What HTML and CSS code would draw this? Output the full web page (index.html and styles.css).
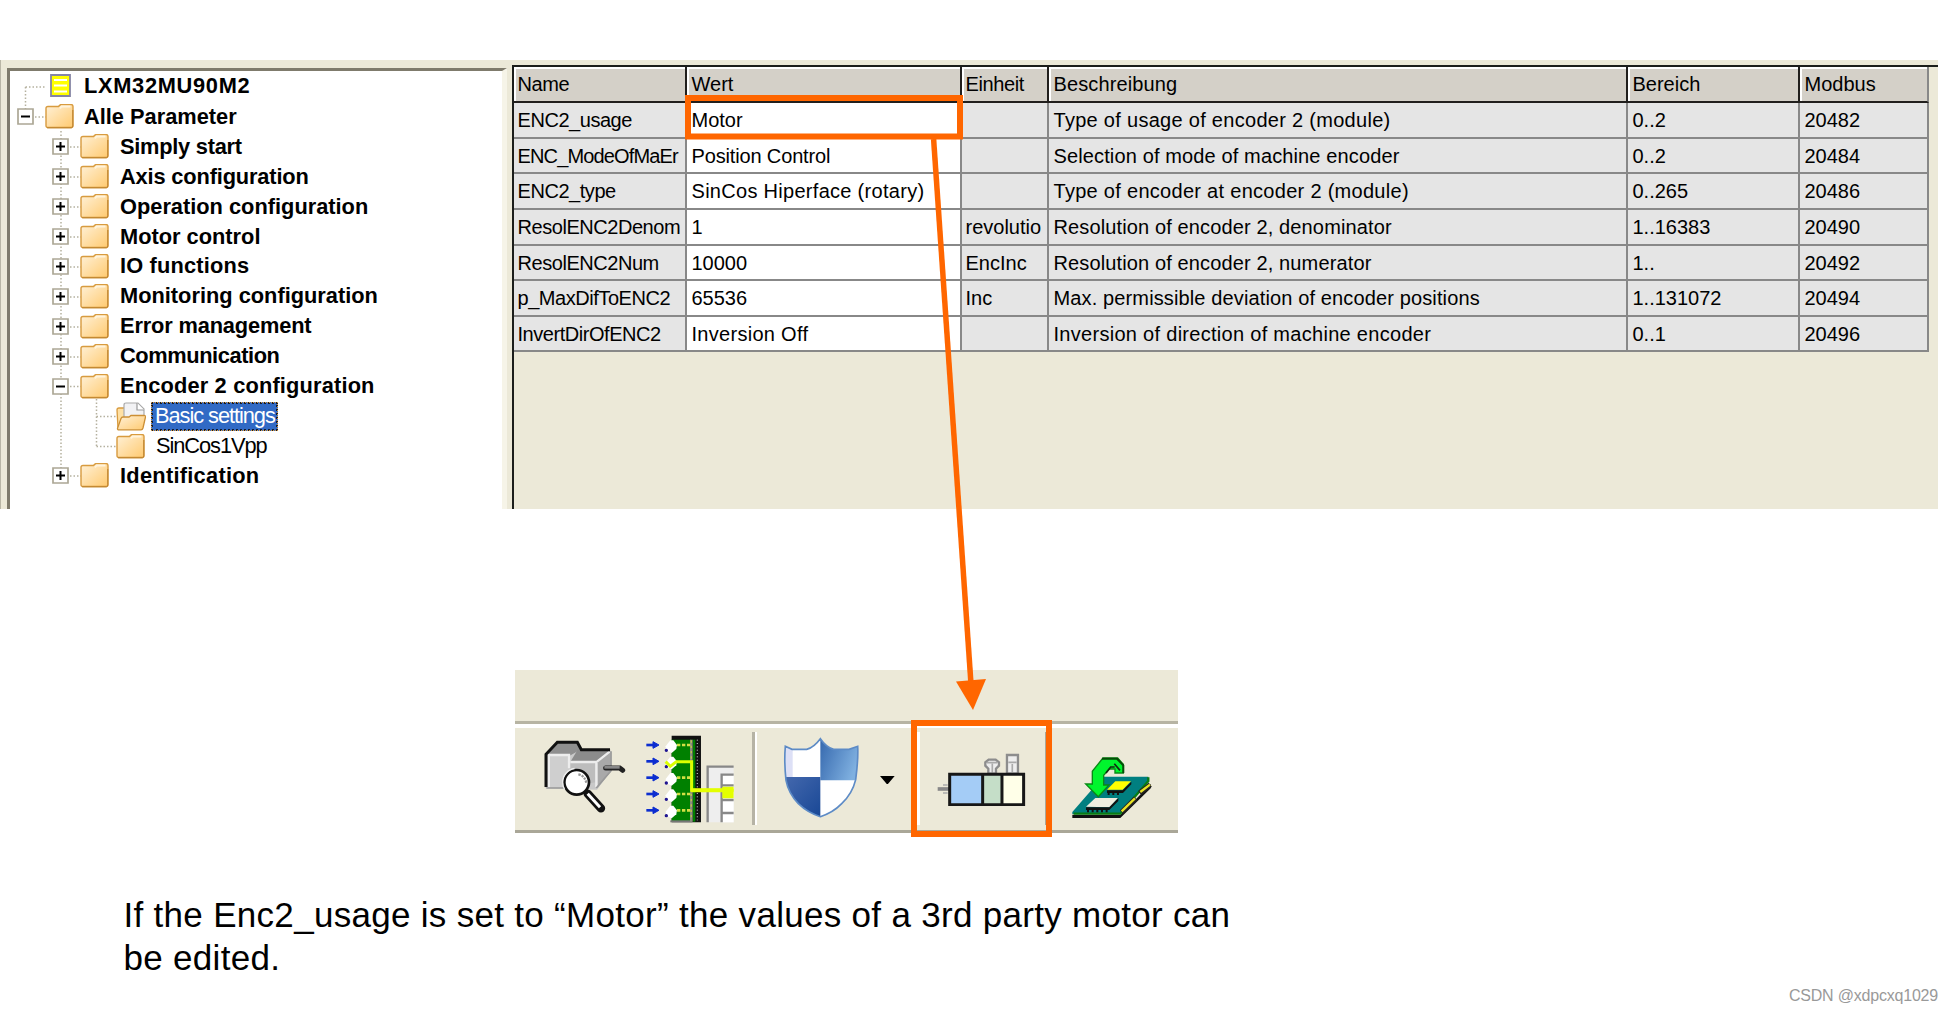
FILE: index.html
```html
<!DOCTYPE html>
<html lang="en">
<head>
<meta charset="utf-8">
<title>Encoder 2 configuration</title>
<link rel="stylesheet" href="styles.css">
</head>
<body>
<svg class="defs" width="0" height="0" aria-hidden="true">
  <defs>
    <linearGradient id="fold" x1="0" y1="0" x2="1" y2="1"><stop offset="0" stop-color="#fff1d8"/><stop offset="1" stop-color="#ffca70"/></linearGradient>
    <symbol id="folder" viewBox="0 0 29 25">
      <path d="M1 4.500q0-2 2-2h10.500q1.500-2 3-2h9.500q2 0 2 2v19q0 2-2 2h-23q-2 0-2-2z" fill="url(#fold)" stroke="#d89b3f" stroke-width="1.400"/>
      <path d="M15 4.500l1.500-2h9" fill="none" stroke="#fff3dc" stroke-width="1.800"/>
      <path d="M2 23.800h24.500q1.300-.2 1.300-2V6" fill="none" stroke="#bd822e" stroke-width="1"/>
    </symbol>
    <symbol id="open" viewBox="0 0 30 29">
      <path d="M1 8q0-2 2-2h6v9H24v11H2z" fill="#ffe0a3" stroke="#d89b3f" stroke-width="1.300"/>
      <path d="M8 19V3q0-2 2-2h12l6 6v12z" fill="#f2f2f4" stroke="#aaa" stroke-width="1.200"/>
      <path d="M21 1v7h7" fill="#fff" stroke="#999" stroke-width="1.200"/>
      <path d="M5 16.500q.5-1.500 2-1.500h6l2-1.500h13q1.800 0 1.500 1.500l-2.500 11q-.5 1.800-2 1.800H3q-1.700 0-1.500-1.500z" fill="url(#fold)" stroke="#cc8f35" stroke-width="1.300"/>
    </symbol>
    <symbol id="plus" viewBox="0 0 17 17"><path d="M1 1h15v15H1z" fill="#fff" stroke="#aca795" stroke-width="1.700"/><path d="M4 8.500h9M8.500 4v9" stroke="#000" stroke-width="2"/></symbol>
    <symbol id="minus" viewBox="0 0 17 17"><path d="M1 1h15v15H1z" fill="#fff" stroke="#aca795" stroke-width="1.700"/><path d="M4 8.500h9" stroke="#000" stroke-width="2"/></symbol>
  </defs>
</svg>

<main class="page">
  <section class="window">
    <nav class="tree">
      <svg class="guides" width="160" height="430"><path d="M15.500 16v24M15.500 16H36M25 46H36M51 60V400M86.500 328v47M86.500 345.500H107M86.500 375.500H107M60 76H71M60 106H71M60 136H71M60 166H71M60 196H71M60 226H71M60 256H71M60 286H71M60 315.500H71M60 405H71"/></svg>
      <ul>
        <li class="root device"><svg class="dev" viewBox="0 0 21 23"><path d="M1 1h19v21H1z" fill="#ff0" stroke="#8585a5" stroke-width="1.800"/><path d="M4 6h13M4 11.500h13M4 17.500h13" stroke="#fff" stroke-width="1.800"/></svg><span>LXM32MU90M2</span></li>
        <li class="root"><svg class="box"><use href="#minus"/></svg><svg class="folder"><use href="#folder"/></svg><span>Alle Parameter</span></li>
        <li class="tight"><svg class="box"><use href="#plus"/></svg><svg class="folder"><use href="#folder"/></svg><span>Simply start</span></li>
        <li class="snug"><svg class="box"><use href="#plus"/></svg><svg class="folder"><use href="#folder"/></svg><span>Axis configuration</span></li>
        <li><svg class="box"><use href="#plus"/></svg><svg class="folder"><use href="#folder"/></svg><span>Operation configuration</span></li>
        <li><svg class="box"><use href="#plus"/></svg><svg class="folder"><use href="#folder"/></svg><span>Motor control</span></li>
        <li class="loose"><svg class="box"><use href="#plus"/></svg><svg class="folder"><use href="#folder"/></svg><span>IO functions</span></li>
        <li><svg class="box"><use href="#plus"/></svg><svg class="folder"><use href="#folder"/></svg><span>Monitoring configuration</span></li>
        <li class="snug"><svg class="box"><use href="#plus"/></svg><svg class="folder"><use href="#folder"/></svg><span>Error management</span></li>
        <li class="tight comm"><svg class="box"><use href="#plus"/></svg><svg class="folder"><use href="#folder"/></svg><span>Communication</span></li>
        <li class="loose"><svg class="box"><use href="#minus"/></svg><svg class="folder"><use href="#folder"/></svg><span>Encoder 2 configuration</span></li>
        <li class="leaf selected"><svg class="openfolder"><use href="#open"/></svg><span>Basic settings</span></li>
        <li class="leaf"><svg class="folder"><use href="#folder"/></svg><span>SinCos1Vpp</span></li>
        <li class="loose ident"><svg class="box"><use href="#plus"/></svg><svg class="folder"><use href="#folder"/></svg><span>Identification</span></li>
      </ul>
    </nav>
    <div class="grid">
      <div class="row head"><div>Name</div><div>Wert</div><div>Einheit</div><div>Beschreibung</div><div>Bereich</div><div>Modbus</div></div>
      <div class="row"><div>ENC2_usage</div><div>Motor</div><div></div><div class="module">Type of usage of encoder 2 (module)</div><div>0..2</div><div>20482</div></div>
      <div class="row"><div class="long">ENC_ModeOfMaEr</div><div class="tight">Position Control</div><div></div><div>Selection of mode of machine encoder</div><div>0..2</div><div>20484</div></div>
      <div class="row"><div>ENC2_type</div><div class="module">SinCos Hiperface (rotary)</div><div></div><div class="module">Type of encoder at encoder 2 (module)</div><div>0..265</div><div>20486</div></div>
      <div class="row"><div>ResolENC2Denom</div><div>1</div><div>revolutio</div><div>Resolution of encoder 2, denominator</div><div>1..16383</div><div>20490</div></div>
      <div class="row"><div>ResolENC2Num</div><div>10000</div><div>EncInc</div><div>Resolution of encoder 2, numerator</div><div>1..</div><div>20492</div></div>
      <div class="row"><div>p_MaxDifToENC2</div><div>65536</div><div>Inc</div><div>Max. permissible deviation of encoder positions</div><div>1..131072</div><div>20494</div></div>
      <div class="row"><div>InvertDirOfENC2</div><div class="module">Inversion Off</div><div></div><div class="module">Inversion of direction of machine encoder</div><div>0..1</div><div>20496</div></div>
    </div>
  </section>

  <section class="toolbar">
    <div class="band"></div>
    <div class="tools">
      <!-- motor with magnifier -->
      <svg class="t-search" viewBox="100 236 248 222">
        <path d="M108 280l36-36h60l10 20v8l88-4 4 60-44 60-154-4z" fill="#c9c9c9"/>
        <path d="M112 276l32-28h60l8 20-32 18-60-2z" fill="#8f8f8f"/><path d="M204 268h98l-20 40h-102z" fill="#8b8b8b"/>
        <path d="M124 284l56 2-8 94h-48z" fill="#cfcfcf"/><path d="M182 306h78v60l-78 10z" fill="#bdbdbd"/>
        <path d="M264 306l38-34v64l-38 46z" fill="#a9a9a9"/><path d="M118 380v-96h60v40M182 305h78v75M262 304l38-30" fill="none" stroke="#ededed" stroke-width="7"/>
        <path d="M109 380v-98l34-36h60l12 22h86" fill="none" stroke="#111" stroke-width="9"/><path d="M110 383h55M260 383l44-52v-58" fill="none" stroke="#999" stroke-width="5"/>
        <path d="M288 323h42l9 7" fill="none" stroke="#222" stroke-width="15" stroke-linecap="round"/><path d="M284 321h46" stroke="#888" stroke-width="8"/>
        <path d="M234 400l40 44" stroke="#111" stroke-width="25" stroke-linecap="round"/><path d="M234 400l37 41" stroke="#fff" stroke-width="9"/>
        <circle cx="201" cy="366" r="37" fill="#fff" stroke="#111" stroke-width="8"/><circle cx="201" cy="366" r="42" fill="none" stroke="#eee" stroke-width="4" stroke-dasharray="80 184" stroke-dashoffset="-110"/>
        <path d="M206 342q19 4 24 25" fill="none" stroke="#999" stroke-width="7" stroke-dasharray="7 3"/>
      </svg>
      <!-- encoder inputs -->
      <svg class="t-encoder" viewBox="404 224 268 264">
        <path d="M484 226h88v260h-88z" fill="#111"/><path d="M484 238h58v244h-58z" fill="#008000"/><path d="M547 238h8v246h-8z" fill="#008000"/><path d="M480 483h66" stroke="#777" stroke-width="6"/>
        <path d="M543 238v246" stroke="#8b8b80" stroke-width="8"/><path d="M543 240v240" stroke="#b9c94c" stroke-width="4" stroke-dasharray="7 9"/>
        <path d="M561 238v242" stroke="#ddd" stroke-width="3" stroke-dasharray="3 7"/>
        <g fill="none" stroke="#d2df44" stroke-width="8" stroke-dasharray="10 5"><path d="M500 254h42M500 352h42M500 401h42M500 450h42"/></g>
        <g fill="#fff"><path id="plug" d="M466 258l14-18 9 0 11 14-2 12-14 12-16-8z"/><use href="#plug" y="49"/><use href="#plug" y="98"/><use href="#plug" y="147"/><use href="#plug" y="196"/></g>
        <g stroke="#0c2ed0" fill="#0c2ed0" stroke-width="8"><g id="arr"><path d="M408 254h28"/><path d="M428 244v20l18-10z" stroke-width="3"/><circle cx="468" cy="270" r="3" stroke-width="4" stroke="#20128c"/></g><use href="#arr" y="49"/><use href="#arr" y="98"/><use href="#arr" y="147"/><use href="#arr" y="196"/></g>
        <path d="M592 486V319h78v167z" fill="#eee"/><path d="M634 345h36v141h-36z" fill="#fff"/>
        <path d="M592 486V319h78M634 486V343h36M634 375h36M634 419h36M634 458h36" fill="none" stroke="#888" stroke-width="7"/>
        <path d="M466 304l14 14 18-14h46v86h126" fill="none" stroke="#dcff00" stroke-width="9"/><path d="M542 384h94v-5h34v35h-34v-18h-94z" fill="#e4ff00"/>
      </svg>
      <div class="separator"></div>
      <svg class="t-shield" viewBox="820 232 230 242">
        <defs><linearGradient id="b1" x1="0" y1="0" x2="1" y2=".4"><stop offset="0" stop-color="#3467ad"/><stop offset="1" stop-color="#7fb0e0"/></linearGradient><linearGradient id="b2" x1="0" y1="0" x2="1" y2="1"><stop offset="0" stop-color="#4569ae"/><stop offset="1" stop-color="#184795"/></linearGradient><clipPath id="sh"><path d="M827 260l20 9h44q22-6 41-32 18 26 40 32h46l26-9q2 38-6 100-10 42-42 72-26 27-64 39-38-12-66-39-30-32-37-70-6-56-2-102z"/></clipPath></defs>
        <g clip-path="url(#sh)"><path d="M820 230h230v245H820z" fill="#fff"/><path d="M932 230h120v132H932z" fill="url(#b1)"/><path d="M820 352h112v124H820z" fill="url(#b2)"/><path d="M838 260v92" stroke="#dde0f6" stroke-width="22"/></g>
        <path d="M827 260l20 9h44q22-6 41-32 18 26 40 32h46l26-9q2 38-6 100-10 42-42 72-26 27-64 39-38-12-66-39-30-32-37-70-6-56-2-102z" fill="none" stroke="#5d8bc6" stroke-width="5"/>
      </svg>
      <svg class="t-drop" viewBox="0 0 44 26"><path d="M0 0h44L22 26z"/></svg>
      <div class="active">
        <svg class="t-motor" viewBox="172 280 268 160">
          <path d="M174 388h36" stroke="#888" stroke-width="11"/><path d="M190 376h14M190 400h14" stroke="#aaa" stroke-width="5"/>
          <path d="M326 342v-15l-9-9v-10l10-8h21l10 8v10l-9 9v15zM382 342v-56h33v56z" fill="#eee" stroke="#8d8d8d" stroke-width="7"/><path d="M322 309h31M338 312v30M386 308h25M398 313v25" fill="none" stroke="#aaa" stroke-width="5"/>
          <path d="M210 343h98v92h-98z" fill="#a4ccf6"/><path d="M308 343h60v92h-60z" fill="#c5dec8"/><path d="M368 343h64v92h-64z" fill="#ffffe8"/><path d="M210 344h222v91H210zM309 344v90M367 344v90" fill="none" stroke="#171717" stroke-width="9"/>
        </svg>
      </div>
      <!-- download to board -->
      <svg class="t-board" viewBox="572 286 244 188">
        <path d="M576 462h144l92-92v12l-92 90H576z" fill="#111"/><path d="M576 454l92-106h136v12l-84 100H576z" fill="#007f80"/><path d="M580 459h140l84-98v-11" fill="none" stroke="#087d13" stroke-width="7"/>
        <path d="M724 454l42-41M778 397l32-25" stroke="#222" stroke-width="15"/><path d="M724 452l40-39M780 394l29-22" stroke="#e8e324" stroke-width="7"/>
        <path d="M680 387l25-25h47l-25 25z" fill="#ff0"/><path d="M680 389h47l26-26v8l-25 26h-48z" fill="#111"/><path d="M617 438l28-26h68l-26 28z" fill="#f0eddf"/><path d="M617 440h70l27-28v9l-27 27h-70z" fill="#111"/><path d="M620 451h64M682 399h42" stroke="#111" stroke-width="8" stroke-dasharray="6 8"/>
        <path d="M616 370h20v-38l32-40h44l17 19v26h-25v-12h-17l-17 19v29h16l-32 35z" fill="#00f52d" stroke="#0a8915" stroke-width="4"/><path d="M665 294h45l19 20v23" fill="none" stroke="#064c08" stroke-width="6"/><path d="M677 337l14-18h12M702 309l17 20" fill="none" stroke="#102a10" stroke-width="5"/>
      </svg>
    </div>
  </section>

  <p class="caption">If the Enc2_usage is set to “Motor” the values of a 3rd party motor can<br>be edited.</p>
  <footer>CSDN @xdpcxq1029</footer>

  <svg class="callout" width="1953" height="1013" fill="none" stroke="#ff6600">
    <path d="M688 98h272v38.500H688zM914 723h135v111H914z" stroke-width="6"/>
    <path d="M933.600 139L971 684" stroke-width="5.500"/><path d="M956 681.500l30-2.500-13 31z" fill="#ff6600" stroke="none"/>
  </svg>
</main>
</body>
</html>
```
FILE: styles.css
```css
* { box-sizing: border-box; }
body { margin: 0; background: #fff; color: #000; font-family: "Liberation Sans", Arial, sans-serif; }
.defs { position: absolute; }
.page { position: relative; width: 1953px; height: 1013px; padding-top: 60px; overflow: hidden; }

/* parameter window */
.window { display: flex; width: 1938px; height: 449px; padding: 5px 0 0 6px; background: #ece9d8; border-left: 1px solid #b9b6a6; }
.tree { position: relative; width: 500px; height: 441px; margin-top: 3px; margin-right: 4.500px; padding-top: 1px; background: #fff; border: solid #7f7b6c; border-width: 3px 5px 0 3px; border-right-color: #f6f4e8; flex: none; }
.tree ul { list-style: none; margin: 0; padding: 0; position: relative; }
.tree li { display: flex; align-items: center; height: 29.930px; padding-left: 42px; font-size: 21.800px; font-weight: bold; white-space: nowrap; }
.tree li.root { padding-left: 7px; }
.tree li.root span { margin-left: -1px; }
.tree li.device { padding-left: 40px; padding-bottom: 2px; letter-spacing: 0.700px; }
.tree li.snug { letter-spacing: -0.150px; }
.tree li.tight { letter-spacing: -0.250px; }
.tree li.comm { letter-spacing: -0.400px; }
.tree li.loose { letter-spacing: 0.170px; }
.tree li.ident { letter-spacing: 0.270px; }
.tree li.leaf { padding-left: 106px; font-weight: normal; letter-spacing: -1.050px; }
.guides { position: absolute; left: 0; top: 0; fill: none; stroke: #b5b19f; stroke-width: 1.500; stroke-dasharray: 1.500 2; }
.box { width: 17px; height: 17px; margin-right: 11px; }
.folder { width: 29px; height: 25px; margin-right: 11px; }
.openfolder { width: 30px; height: 29px; margin-right: 5px; }
.dev { width: 21px; height: 23px; margin-right: 14px; }
.selected span { display: block; height: 29px; line-height: 24px; padding: 0 1px 0 2px; color: #fff; background: #316ac5; border: 2px dotted #141c30; outline: 1px dotted #d99c45; outline-offset: -1px; }

/* grid */
.grid { flex: 1; border: solid #1c1e1b; border-width: 2px 0 0 2px; font-size: 20px; }
.row { display: grid; grid-template-columns: 173px 275px 87px 579px 172px 129px; height: 35.630px; line-height: 34px; white-space: nowrap; }
.row > div { padding-left: 5px; background: #e5e5e5; border: solid #888; border-width: 0 2px 2px 0; overflow: hidden; }
.row > div:nth-child(2) { background: #fff; }
.row > div:first-child { padding-left: 4px; letter-spacing: -0.450px; }
.row > div:first-child.long { letter-spacing: -0.850px; }
.row > div:nth-child(3) { padding-left: 4px; }
.row > div:nth-child(4) { letter-spacing: 0.130px; }
.row > div.module { letter-spacing: 0.290px; }
.row > div.tight { letter-spacing: -0.150px; }
.head { height: 36px; line-height: 35px; }
.head > div, .head > div:nth-child(2) { background: #d4d0c8; border-color: #211f1d; box-shadow: inset 2px 2px #fff; }
.head > div:nth-child(3) { letter-spacing: -0.400px; }
.head > div:last-child { border-right-color: #888; }

/* toolbar */
.toolbar { width: 663px; height: 163px; margin: 161px 0 0 515px; background: #ece9d8; border-bottom: 3px solid #aaa798; }
.band { height: 54px; border-bottom: 3px solid #b7b4a3; }
.tools { display: flex; align-items: flex-start; height: 106px; border-top: 4px solid #fff; }
.t-search { width: 82.700px; height: 74px; margin: 10.700px 0 0 28.300px; }
.t-encoder { width: 89.300px; height: 88px; margin: 6.700px 0 0 18.700px; }
.separator { width: 5px; height: 93px; margin: 4px 0 0 18px; border-left: 3px solid #b6b3a5; border-right: 2px solid #fff; }
.t-shield { width: 76.700px; height: 80.700px; margin: 9.300px 0 0 26.300px; }
.t-drop { width: 14.700px; height: 8.700px; margin: 47.500px 0 0 20.500px; }
.active { width: 130px; height: 93px; margin: 4px 0 0 22px; border: solid #fff; border-width: 0 2px 0 3px; border-right-color: #aaa798; }
.t-motor { display: block; width: 89.300px; height: 53.300px; margin: 21px 0 0 16.700px; }
.t-board { width: 81.300px; height: 62.700px; margin: 27.500px 0 0 23.500px; }

/* text */
.caption { margin: 60px 0 0 123.500px; font-size: 35px; letter-spacing: 0.300px; line-height: 43.200px; white-space: nowrap; }
footer { width: 1938px; margin-top: 7px; text-align: right; font-size: 16px; letter-spacing: -0.200px; line-height: 20px; color: #999; }
.callout { position: absolute; left: 0; top: 0; }
```
